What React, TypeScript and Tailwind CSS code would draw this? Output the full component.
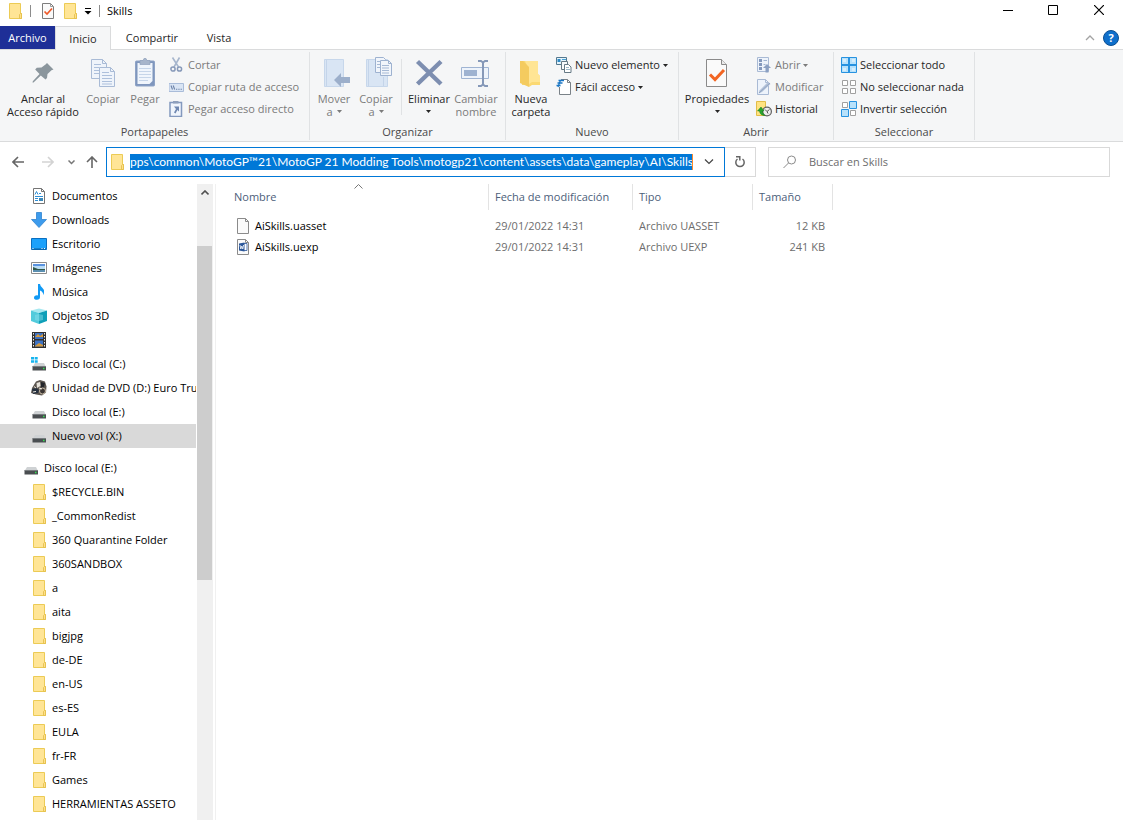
import type { ReactNode } from 'react';

type IconProps = { className?: string };

function FolderIcon({ className = 'h-4 w-4' }: IconProps) {
  return (
    <svg viewBox="0 0 16 16" className={className} aria-hidden="true">
      <path d="M2.500.5h11v10h1v5h-12z" fill="#ffe596" stroke="#eccb55" />
      <path d="M12.500 15.500v-4l1-1h1v5z" fill="#ffe08a" stroke="#e2bd48" strokeWidth=".8" />
    </svg>
  );
}

function CheckPageIcon({ className = 'h-4 w-4' }: IconProps) {
  return (
    <svg viewBox="0 0 16 16" className={className} aria-hidden="true">
      <path d="M2.500.5h8l3 3v12h-11z" fill="#fafafa" stroke="#7d7d7d" />
      <path d="M10.500.5v3h3" fill="none" stroke="#9a9a9a" />
      <path d="M4.500 8.500 7 11l5-5.500" fill="none" stroke="#ee5a2a" strokeWidth="1.700" />
    </svg>
  );
}

function PinIcon() {
  return (
    <svg viewBox="0 0 32 32" className="h-8 w-8" aria-hidden="true">
      <path d="M20 7 26.500 13.500 24.500 14.200 20.500 18 20 22 18.500 23.500 13.800 19.500 6.500 26.500 5.500 26.500 5.800 25.200 12.500 18 8.200 13.500 9.800 11.700 14.500 11.500 18.500 8.500z" fill="#8b969d" />
    </svg>
  );
}

function CopyIcon() {
  return (
    <svg viewBox="0 0 32 32" className="h-8 w-8" aria-hidden="true">
      <g fill="#eff4fb" stroke="#a9bbd6">
        <path d="M4.500 3.500h11l4 4v15h-15z" />
        <path d="M12.500 11.500h11l4 4v15h-15z" />
        <path d="M15.500 3.500v4h4M23.500 11.500v4h4" fill="none" />
      </g>
      <path d="M7 8.500h7M7 11.500h5M7 14.500h5M7 17.500h5M15 16.500h7M15 19.500h10M15 22.500h10M15 25.500h10M15 28h10" stroke="#adc0dc" fill="none" />
    </svg>
  );
}

function PasteIcon() {
  return (
    <svg viewBox="0 0 32 32" className="h-8 w-8" aria-hidden="true">
      <rect x="6.500" y="5" width="19" height="25" rx="1" fill="#7f96bd" stroke="#8ea3c6" />
      <path d="M8.500 7h15v18l-3 3h-12z" fill="#f0f5fc" />
      <path d="M10 12.500h12M10 15.500h12M10 18.500h12M10 21.500h12M10 24.500h9" stroke="#c6d5e9" />
      <path d="M11 4.500h3l1-2h2l1 2h3v4H11z" fill="#a7b5cb" stroke="#8fa0bb" strokeWidth=".7" />
    </svg>
  );
}

function ScissorsIcon() {
  return (
    <svg viewBox="0 0 16 16" className="h-4 w-4" aria-hidden="true">
      <path d="M3.500.5 9.500 10M10.500.5 5 10" stroke="#a7b6cd" strokeWidth="1.600" fill="none" />
      <circle cx="4" cy="12" r="2.100" fill="none" stroke="#8799b9" strokeWidth="1.500" />
      <circle cx="10.500" cy="12" r="2.100" fill="none" stroke="#8799b9" strokeWidth="1.500" />
    </svg>
  );
}

function PathIcon() {
  return (
    <svg viewBox="0 0 16 16" className="h-4 w-4" aria-hidden="true">
      <path d="M0 4.500h14.500v8H0z" fill="#dae5f4" stroke="#a9bcd9" />
      <path d="m2 6.500 1.500 4m.7-4 1.500 4M7 10.200h1.300m1 0h1.300m1 0h1.300" stroke="#6c82a8" strokeWidth="1.100" />
    </svg>
  );
}

function PasteLinkIcon() {
  return (
    <svg viewBox="0 0 16 16" className="h-4 w-4" aria-hidden="true">
      <path d="M1 1.500h11.500v14H1z" fill="#f0f5fc" stroke="#8399be" strokeWidth="1.500" />
      <path d="M4 0h5.500v2.500H4z" fill="#8fa0bc" />
      <path d="M5 5.500h5v5L8.400 9 6.500 12.500l-1.500-1L7 8z" fill="#6f87b1" />
    </svg>
  );
}

function MoveToIcon() {
  return (
    <svg viewBox="0 0 32 32" className="h-8 w-8" aria-hidden="true">
      <path d="M6.500 3.500h19v27h-19z" fill="#d9e5f4" stroke="#c7d7eb" />
      <path d="M8.500 4v26" stroke="#c4d4e9" />
      <path d="m16 24 7-7v4h9v6h-9v4z" fill="#9cafcb" />
    </svg>
  );
}

function CopyToIcon() {
  return (
    <svg viewBox="0 0 32 32" className="h-8 w-8" aria-hidden="true">
      <path d="M6.500 3.500h21v27h-21z" fill="#d9e5f4" stroke="#c7d7eb" />
      <path d="M8.500 4v26M23.500 21v9" stroke="#c4d4e9" />
      <g fill="#f1f5fb" stroke="#9eb2d0">
        <path d="M15.500 1.500h8l2 2v13h-10z" />
        <path d="M20.500 4.500h8l3 3v12h-11z" />
        <path d="M28.500 4.500v3h3" fill="none" />
      </g>
      <path d="M17 5.500h3M17 8.500h3M17 11.500h3M22 9.500h7M22 12h7M22 14.500h7M22 17h7" stroke="#a6b9d5" />
    </svg>
  );
}

function DeleteIcon() {
  return (
    <svg viewBox="0 0 32 32" className="h-8 w-8" aria-hidden="true">
      <path d="M4.500 5.500 28 28M28 5.500 4.500 28" stroke="#7d8eb0" strokeWidth="4.400" />
    </svg>
  );
}

function RenameIcon() {
  return (
    <svg viewBox="0 0 32 32" className="h-8 w-8" aria-hidden="true">
      <path d="M1.500 11.500h27v11h-27z" fill="#edf3fb" stroke="#9fb4d3" />
      <path d="M4 14h13v6H4z" fill="#9db2d1" />
      <path d="M18 5h3l2 1.500L25 5h3M23 6.500v22M18 30h3l2-1.500 2 1.500h3" stroke="#8598b8" strokeWidth="2" fill="none" />
    </svg>
  );
}

function NewFolderIcon() {
  return (
    <svg viewBox="0 0 32 32" className="h-8 w-8" aria-hidden="true">
      <path d="M5 5h18v13l2 2v9H7z" fill="#fbd973" />
      <path d="M10 5h13v13l2 2v9H13V12z" fill="#ffe594" />
      <path d="M5 5h3l6 6v20l-9-4z" fill="#f4cb5f" />
      <path d="M14 31v-3l3-2h8v3h-8z" fill="#fbd973" />
    </svg>
  );
}

function NewItemIcon() {
  return (
    <svg viewBox="0 0 16 16" className="h-4 w-4" aria-hidden="true">
      <path d="M.5.5h10v7H.5z" fill="#e4f3fb" stroke="#54788f" />
      <path d="M1.500 2h3v3h-3z" fill="#2d8ac7" />
      <path d="M6 2.500h4M6 4.500h3" stroke="#49a3d8" />
      <path d="M5.500 4.500h6v8h-6z" fill="#f7fafc" stroke="#657985" />
      <path d="M8.500 7.500h4l2.500 2.500v5.500H8.500z" fill="#fff" stroke="#657985" />
      <path d="M10 10.500h3M10 12.500h4" stroke="#9db8c8" />
    </svg>
  );
}

function EasyAccessIcon() {
  return (
    <svg viewBox="0 0 16 16" className="h-4 w-4" aria-hidden="true">
      <path d="M3.500.5h8l3 3v12h-11z" fill="#fff" stroke="#7a8288" />
      <path d="M11.500.5v3h3" stroke="#7a8288" fill="none" />
      <path d="M0 0h5v8H0z" fill="#f5f6f7" />
      <path d="M2.500 1.500H8M1.500 4h5M.5 6.500h4" stroke="#1976c4" strokeWidth="1.500" />
      <path d="M4.500 1 2 8" stroke="#1976c4" strokeWidth="1.200" />
    </svg>
  );
}

function PropertiesIcon() {
  return (
    <svg viewBox="0 0 32 32" className="h-8 w-8" aria-hidden="true">
      <path d="M5.500 3.500h15l5 5v22h-20z" fill="#fafafa" stroke="#8a8a8a" />
      <path d="M20.500 3.500v5h5" fill="#eaeaea" stroke="#8a8a8a" />
      <path d="m9 18.500 5 5 9-9.500" fill="none" stroke="#f26522" strokeWidth="3" />
    </svg>
  );
}

function OpenIcon() {
  return (
    <svg viewBox="0 0 16 16" className="h-4 w-4" aria-hidden="true">
      <path d="M1.500.5h11v14h-11z" fill="#edf3fb" stroke="#a9bad5" />
      <path d="M3 2h3v3H3zM3 6h3v3H3zM3 10h3v3H3z" fill="#8499bd" />
      <path d="M7.500 3.500h3.500M7.500 7.500h2" stroke="#a1b4d1" />
      <path d="m11 7 4 4h-2.500v4.500h-3V11H7z" fill="#8ba0c2" />
    </svg>
  );
}

function EditIcon() {
  return (
    <svg viewBox="0 0 16 16" className="h-4 w-4" aria-hidden="true">
      <path d="M1.500.5h8l3 3v12h-11z" fill="#edf3fb" stroke="#a9bad5" />
      <path d="M9.500.5v3h3" fill="none" stroke="#a9bad5" />
      <path d="m2.500 14.500 1-3L12 3l2.500 2L6 13z" fill="#b3c2d8" />
      <path d="m3 14 11-10" stroke="#8fa3c3" />
    </svg>
  );
}

function HistoryIcon() {
  return (
    <svg viewBox="0 0 16 16" className="h-4 w-4" aria-hidden="true">
      <path d="M.5.5h9v7h1v7H.5z" fill="#ffe382" stroke="#e2bd48" />
      <circle cx="11" cy="10.500" r="4.400" fill="#eee" stroke="#606060" strokeWidth="1.200" />
      <path d="m9 8.500 2 2 2.500-2M11 10.500l1 2" stroke="#555" fill="none" />
      <path d="M1.500 10 5 6l3 4H6.300q.2 2.500 2.500 4.500Q4 14.500 3.500 10z" fill="#28a52f" stroke="#147a1b" strokeWidth=".5" />
    </svg>
  );
}

const plainTiles = ['M1.500 1.500h5v5h-5z', 'M9.500 1.500h5v5h-5z', 'M1.500 9.500h5v5h-5z', 'M9.500 9.500h5v5h-5z'];
const markedTiles: Record<number, string> = { 1: 'M8.500.5h7v7h-7z', 2: 'M.5 8.500h7v7h-7z' };

function TilesIcon({ mode }: { mode: 'all' | 'none' | 'invert' }) {
  if (mode === 'all') {
    return (
      <svg viewBox="0 0 16 16" className="h-4 w-4" aria-hidden="true">
        <path d="M.5.5h15v15H.5z" fill="#b7e1fb" stroke="#2792e0" />
        <path d="M8 0v16M0 8h16" stroke="#2792e0" strokeWidth="2" />
        <path d="M2 2h3v3H2zM11 2h3v3h-3zM2 11h3v3H2zM11 11h3v3h-3z" fill="#d5eefd" />
      </svg>
    );
  }
  return (
    <svg viewBox="0 0 16 16" className="h-4 w-4" aria-hidden="true">
      {plainTiles.map((d, i) =>
        mode === 'invert' && markedTiles[i] ? (
          <path key={d} d={markedTiles[i]} fill="#b7e1fb" stroke="#2792e0" />
        ) : (
          <path key={d} d={d} fill="#fff" stroke="#a0a0a0" />
        ),
      )}
    </svg>
  );
}

function DocumentsIcon() {
  return (
    <svg viewBox="0 0 16 16" className="h-4 w-4" aria-hidden="true">
      <path d="M2.500.5h8l3 3v12h-11z" fill="#fff" stroke="#757575" />
      <path d="M10.500.5v3h3" fill="none" stroke="#757575" />
      <path d="m4 6.500 1.500-3L7 6.500M8 5.500h2M4 8.500h8M4 10.500h3M4 12.500h3" stroke="#2e8fd6" fill="none" />
      <path d="M8 10h4v3H8z" fill="#3b88b8" />
    </svg>
  );
}

function DownloadIcon() {
  return (
    <svg viewBox="0 0 16 16" className="h-4 w-4" aria-hidden="true">
      <path d="M5.500.5h5v7h5L8 15.500.5 7.500h5z" fill="#3d9bec" stroke="#2f83cf" strokeWidth=".8" />
    </svg>
  );
}

function DesktopIcon() {
  return (
    <svg viewBox="0 0 16 16" className="h-4 w-4" aria-hidden="true">
      <path d="M.5 2.500h15v11H.5z" fill="#1ba1fb" stroke="#0a6fc0" />
      <path d="M1 13h14" stroke="#075e9f" />
      <path d="M1.500 12.500h1M10.500 12.500h1M13 12.500h1" stroke="#fff" />
    </svg>
  );
}

function ImagesIcon() {
  return (
    <svg viewBox="0 0 16 16" className="h-4 w-4" aria-hidden="true">
      <path d="M.5 2.500h15v11H.5z" fill="#fff" stroke="#8c8c8c" />
      <path d="M2 4h12v8H2z" fill="#b9dcf5" />
      <path d="M2 4h12v2H2z" fill="#5a93e0" />
      <path d="m2 7 5 2h7v1H2z" fill="#31584a" />
      <path d="M2 10h12v2H2z" fill="#5b8fb0" />
    </svg>
  );
}

function MusicIcon() {
  return (
    <svg viewBox="0 0 16 16" className="h-4 w-4" aria-hidden="true">
      <path d="M7 0h2q.3 2.500 2.500 4T13 8.500q0 1.500-.8 2.500.3-3-3.200-4.500V13q0 2.700-3 2.700-3 0-3-2 0-2.200 3-2.400L7 11.500z" fill="#119af5" />
    </svg>
  );
}

function CubeIcon() {
  return (
    <svg viewBox="0 0 16 16" className="h-4 w-4" aria-hidden="true">
      <path d="m0 2.500 8-2 8 2-8 2.500z" fill="#a6e8f0" />
      <path d="M0 2.500 8 5v11l-8-3z" fill="#52cbdc" />
      <path d="M16 2.500 8 5v11l8-3z" fill="#0e9fb8" />
      <path d="m4 7 4-1 4 1v5l-4 1-4-1z" fill="#8fe0ea" opacity=".45" />
    </svg>
  );
}

function VideoIcon() {
  return (
    <svg viewBox="0 0 16 16" className="h-4 w-4" aria-hidden="true">
      <path d="M1 0h14v16H1z" fill="#303030" />
      <path d="M2.500 1v14M13.500 1v14" stroke="#e9e9e9" strokeDasharray="1.500 1.500" />
      <path d="M4 1h8v6H4zM4 8.500h8v6H4z" fill="#3d72c4" />
      <path d="m4 5 3-3 2 2 3-2v3zM4 14l4-3 4 2v1.500H4z" fill="#d69a3a" />
    </svg>
  );
}

function DriveIcon({ system = false }: { system?: boolean }) {
  return (
    <svg viewBox="0 0 16 16" className="h-4 w-4" aria-hidden="true">
      <path d="M4 7h9l2 4H1.500z" fill="#cfd2d4" />
      <path d="M1.500 10.500h13.500v4H1.500z" fill="#4a4e51" />
      <path d="M1.500 10.500h13.500" stroke="#777b7e" />
      <path d="M12 11.800h1.500v1.500H12z" fill="#32e24f" />
      {system && <path d="M0 1h3v2.500H0zM3.700 1h3v2.500h-3zM0 4.200h3v2.500H0zM3.700 4.200h3v2.500h-3z" fill="#17b4ee" />}
    </svg>
  );
}

function DvdIcon() {
  return (
    <svg viewBox="0 0 16 16" className="h-4 w-4" aria-hidden="true">
      <path d="M5 1.500 9 0l5 1.500 1.500 5-.5 6-4 3-6-1L0 13l1-5z" fill="#5c5650" />
      <path d="M5.500 3 9 2l.5 4-3.500 2z" fill="#e6e2da" />
      <path d="m10 2 4 1-1 4-3 1z" fill="#24262b" />
      <path d="m1 9 4-1 3 2-1 3-5 1z" fill="#26303f" />
      <circle cx="11.500" cy="11" r="3" fill="#3b3633" stroke="#c9bba6" />
      <path d="M3 6.500 5 8M8 8l3 1M2 12l3-.5" stroke="#f1ece3" />
    </svg>
  );
}

function FileIcon({ word = false }: { word?: boolean }) {
  return (
    <svg viewBox="0 0 16 16" className="h-4 w-4 shrink-0" aria-hidden="true">
      <path d="M1.500.5h8l3 3v12h-11z" fill="#fbfbfb" stroke="#8b8b8b" />
      <path d="M9.500.5v3h3" fill="none" stroke="#8b8b8b" />
      {word && (
        <>
          <path d="M8 4.500h3v7H8" fill="#fff" stroke="#2b579a" strokeWidth=".8" />
          <path d="m3 4.500 5.500-1v9L3 11.500z" fill="#2b579a" />
          <path d="m4 6 .8 4L5.800 7l1 3 .8-4" fill="none" stroke="#fff" strokeWidth=".8" />
        </>
      )}
    </svg>
  );
}

function Caret() {
  return (
    <svg viewBox="0 0 5 3" className="h-[3px] w-[5px] shrink-0" aria-hidden="true">
      <path d="M0 0h5L2.500 3z" fill="currentColor" />
    </svg>
  );
}

type BigProps = { icon: ReactNode; lines: string[]; width: string; disabled?: boolean; caret?: boolean };

function BigButton({ icon, lines, width, disabled = false, caret = false }: BigProps) {
  return (
    <button
      type="button"
      disabled={disabled}
      className={`flex shrink-0 flex-col items-center pt-0.5 text-[#262626] disabled:text-[#7b7b7b] ${width}`}
    >
      {icon}
      <span className="flex flex-col items-center pt-1 leading-[13px] whitespace-nowrap">
        {lines.map((line, i) => (
          <span key={line} className="flex items-center gap-1">
            {line}
            {caret && i === 1 && <Caret />}
          </span>
        ))}
        {caret && lines.length === 1 && (
          <span className="flex h-3 items-center">
            <Caret />
          </span>
        )}
      </span>
    </button>
  );
}

type SmallProps = { icon: ReactNode; label: string; disabled?: boolean; caret?: boolean };

function SmallButton({ icon, label, disabled = false, caret = false }: SmallProps) {
  return (
    <button
      type="button"
      disabled={disabled}
      className="flex h-[22px] items-center gap-[3px] whitespace-nowrap text-[#262626] disabled:text-[#7b7b7b]"
    >
      {icon}
      <span>{label}</span>
      {caret && <Caret />}
    </button>
  );
}

function Group({ title, width, children }: { title: string; width: string; children: ReactNode }) {
  return (
    <section aria-label={title} className={`mt-0.5 mb-px flex shrink-0 flex-col border-r border-[#e0e2e4] pt-0.5 ${width}`}>
      <div className="flex h-[70px] items-start">{children}</div>
      <h2 className="text-center leading-4 text-[#4a4a4a]">{title}</h2>
    </section>
  );
}

const quick: { label: string; icon: ReactNode; selected?: boolean }[] = [
  { label: 'Documentos', icon: <DocumentsIcon /> },
  { label: 'Downloads', icon: <DownloadIcon /> },
  { label: 'Escritorio', icon: <DesktopIcon /> },
  { label: 'Imágenes', icon: <ImagesIcon /> },
  { label: 'Música', icon: <MusicIcon /> },
  { label: 'Objetos 3D', icon: <CubeIcon /> },
  { label: 'Vídeos', icon: <VideoIcon /> },
  { label: 'Disco local (C:)', icon: <DriveIcon system /> },
  { label: 'Unidad de DVD (D:) Euro Truck', icon: <DvdIcon /> },
  { label: 'Disco local (E:)', icon: <DriveIcon /> },
  { label: 'Nuevo vol (X:)', icon: <DriveIcon />, selected: true },
];

const folders = [
  '$RECYCLE.BIN', '_CommonRedist', '360 Quarantine Folder', '360SANDBOX', 'a', 'aita', 'bigjpg',
  'de-DE', 'en-US', 'es-ES', 'EULA', 'fr-FR', 'Games', 'HERRAMIENTAS ASSETO',
];

const files = [
  { name: 'AiSkills.uasset', date: '29/01/2022 14:31', type: 'Archivo UASSET', size: '12 KB', word: false },
  { name: 'AiSkills.uexp', date: '29/01/2022 14:31', type: 'Archivo UEXP', size: '241 KB', word: true },
];

function TreeItem({ icon, label, selected = false, root = false }: { icon: ReactNode; label: string; selected?: boolean; root?: boolean }) {
  return (
    <li>
      <a
        href="#"
        className={`flex h-6 items-center gap-[5px] overflow-hidden whitespace-nowrap ${root ? 'pl-[23px]' : 'pl-[31px]'} ${selected ? 'bg-[#d9d9d9]' : ''}`}
      >
        <span className="shrink-0">{icon}</span>
        <span>{label}</span>
      </a>
    </li>
  );
}

function TitleBar() {
  return (
    <header className="flex h-[26px] items-start">
      <div className="flex h-[22px] items-center pl-[7px]">
        <FolderIcon />
        <span className="mx-[7px] h-3 w-px bg-[#8c8c8c]" />
        <button type="button" aria-label="Propiedades" className="ml-0.5">
          <CheckPageIcon />
        </button>
        <button type="button" aria-label="Nueva carpeta" className="ml-1.5">
          <FolderIcon />
        </button>
        <button type="button" aria-label="Personalizar barra" className="ml-1.5">
          <svg viewBox="0 0 8 8" className="h-2 w-2" aria-hidden="true">
            <path d="M1 1.500h6" stroke="#000" />
            <path d="M.5 4h7L4 7.500z" />
          </svg>
        </button>
        <span className="mx-[7px] h-3 w-px bg-[#8c8c8c]" />
        <h1>Skills</h1>
      </div>
      <div className="ml-auto flex pr-px">
        <button type="button" aria-label="Minimizar" className="flex h-5 w-[45px] items-center justify-center">
          <svg viewBox="0 0 10 10" className="h-2.5 w-2.5" aria-hidden="true"><path d="M0 5.500h10" stroke="#000" /></svg>
        </button>
        <button type="button" aria-label="Maximizar" className="flex h-5 w-[46px] items-center justify-center">
          <svg viewBox="0 0 10 10" className="h-2.5 w-2.5" aria-hidden="true"><path d="M.5.5h9v9h-9z" fill="none" stroke="#000" /></svg>
        </button>
        <button type="button" aria-label="Cerrar" className="flex h-5 w-[46px] items-center justify-center">
          <svg viewBox="0 0 10 10" className="h-2.5 w-2.5" aria-hidden="true"><path d="m0 0 10 10M10 0 0 10" stroke="#000" strokeWidth="1.200" /></svg>
        </button>
      </div>
    </header>
  );
}

function Tabs() {
  return (
    <nav aria-label="Cinta" className="flex h-6 items-stretch border-b border-[#dadbdc]">
      <button type="button" className="w-[55px] bg-[#1e2f97] text-white">Archivo</button>
      <button type="button" className="-mb-px w-14 border border-b-0 border-[#dadbdc] bg-[#f5f6f7] text-[#262626]">Inicio</button>
      <button type="button" className="w-[82px] text-[#262626]">Compartir</button>
      <button type="button" className="w-[52px] text-[#262626]">Vista</button>
      <div className="ml-auto flex items-center gap-2 pr-1">
        <button type="button" aria-label="Minimizar la cinta">
          <svg viewBox="0 0 10 6" className="h-1.5 w-2.5" aria-hidden="true"><path d="m1 5 4-4 4 4" fill="none" stroke="#a3a3a3" strokeWidth="1.300" /></svg>
        </button>
        <button type="button" aria-label="Ayuda" className="flex h-4 w-4 items-center justify-center rounded-full border border-[#0b4f92] bg-[#0f6fcb] font-bold text-white">
          ?
        </button>
      </div>
    </nav>
  );
}

function Ribbon() {
  return (
    <div className="flex overflow-hidden border-b border-[#dadbdc] bg-[#f5f6f7]">
      <Group title="Portapapeles" width="w-[310px]">
        <BigButton icon={<PinIcon />} lines={['Anclar al', 'Acceso rápido']} width="w-[82px] pl-1" />
        <BigButton icon={<CopyIcon />} lines={['Copiar']} width="w-[42px]" disabled />
        <BigButton icon={<PasteIcon />} lines={['Pegar']} width="w-[42px]" disabled />
        <div className="ml-[3px]">
          <SmallButton icon={<ScissorsIcon />} label="Cortar" disabled />
          <SmallButton icon={<PathIcon />} label="Copiar ruta de acceso" disabled />
          <SmallButton icon={<PasteLinkIcon />} label="Pegar acceso directo" disabled />
        </div>
      </Group>
      <Group title="Organizar" width="w-[196px]">
        <BigButton icon={<MoveToIcon />} lines={['Mover', 'a']} width="ml-[3px] w-[42px]" disabled caret />
        <BigButton icon={<CopyToIcon />} lines={['Copiar', 'a']} width="w-[42px]" disabled caret />
        <span className="mx-1 mt-[5px] h-14 w-px bg-[#e0e2e4]" />
        <BigButton icon={<DeleteIcon />} lines={['Eliminar']} width="w-[46px]" caret />
        <BigButton icon={<RenameIcon />} lines={['Cambiar', 'nombre']} width="w-12" disabled />
      </Group>
      <Group title="Nuevo" width="w-[173px]">
        <BigButton icon={<NewFolderIcon />} lines={['Nueva', 'carpeta']} width="w-[50px]" />
        <div>
          <SmallButton icon={<NewItemIcon />} label="Nuevo elemento" caret />
          <SmallButton icon={<EasyAccessIcon />} label="Fácil acceso" caret />
        </div>
      </Group>
      <Group title="Abrir" width="w-[155px]">
        <BigButton icon={<PropertiesIcon />} lines={['Propiedades']} width="ml-0.5 w-[72px]" caret />
        <div className="ml-[3px]">
          <SmallButton icon={<OpenIcon />} label="Abrir" disabled caret />
          <SmallButton icon={<EditIcon />} label="Modificar" disabled />
          <SmallButton icon={<HistoryIcon />} label="Historial" />
        </div>
      </Group>
      <Group title="Seleccionar" width="w-[141px]">
        <div className="ml-[7px]">
          <SmallButton icon={<TilesIcon mode="all" />} label="Seleccionar todo" />
          <SmallButton icon={<TilesIcon mode="none" />} label="No seleccionar nada" />
          <SmallButton icon={<TilesIcon mode="invert" />} label="Invertir selección" />
        </div>
      </Group>
    </div>
  );
}

function AddressBar() {
  return (
    <div className="grid h-[42px] shrink-0 grid-cols-[106px_minmax(0,619fr)_31px_minmax(0,354fr)] items-start pt-[5px] pr-[13px]">
      <div className="flex h-[30px] items-center pl-3">
        <button type="button" aria-label="Atrás">
          <svg viewBox="0 0 12 12" className="h-3 w-3" aria-hidden="true"><path d="M12 6H1M6 1 1 6l5 5" fill="none" stroke="#666" strokeWidth="1.600" /></svg>
        </button>
        <button type="button" aria-label="Adelante" disabled className="ml-[18px]">
          <svg viewBox="0 0 12 12" className="h-3 w-3" aria-hidden="true"><path d="M0 6h11M6 1l5 5-5 5" fill="none" stroke="#d3d3d3" strokeWidth="1.600" /></svg>
        </button>
        <button type="button" aria-label="Ubicaciones recientes" className="ml-3.5">
          <svg viewBox="0 0 7 5" className="h-[5px] w-[7px]" aria-hidden="true"><path d="m.5.5 3 3 3-3" fill="none" stroke="#777" strokeWidth="1.500" /></svg>
        </button>
        <button type="button" aria-label="Subir" className="ml-[11px]">
          <svg viewBox="0 0 12 12" className="h-3 w-3" aria-hidden="true"><path d="M6 12V1M1 6l5-5 5 5" fill="none" stroke="#666" strokeWidth="1.600" /></svg>
        </button>
      </div>
      <div className="flex h-[30px] items-center border border-[#0078d7] pl-0.5">
        <span className="shrink-0"><FolderIcon /></span>
        <input
          type="text"
          aria-label="Dirección"
          defaultValue={'pps\\common\\MotoGP™21\\MotoGP 21 Modding Tools\\motogp21\\content\\assets\\data\\gameplay\\AI\\Skills'}
          className="ml-[5px] h-4 min-w-0 flex-1 border-r border-[#ff8728] bg-[#0078d7] font-['Lato',sans-serif] text-xs text-white outline-none"
        />
        <button type="button" aria-label="Mostrar historial" className="flex h-full w-[31px] items-center justify-center">
          <svg viewBox="0 0 10 6" className="h-1.5 w-2.5" aria-hidden="true"><path d="m1 .5 4 4 4-4" fill="none" stroke="#444" strokeWidth="1.200" /></svg>
        </button>
      </div>
      <button type="button" aria-label="Actualizar" className="flex h-[30px] items-center justify-center border border-l-0 border-[#d9d9d9]">
        <svg viewBox="0 0 12 12" className="h-3 w-3" aria-hidden="true">
          <path d="M8.500 3A4.200 4.200 0 1 1 3.500 3" fill="none" stroke="#666" strokeWidth="1.500" />
          <path d="M2 .8h3.800v3.700" fill="none" stroke="#666" strokeWidth="1.500" />
        </svg>
      </button>
      <label className="ml-3 flex h-[30px] items-center border border-[#d9d9d9] pl-3.5">
        <svg viewBox="0 0 14 14" className="h-3.5 w-3.5 shrink-0" aria-hidden="true">
          <circle cx="8.500" cy="5" r="4" fill="none" stroke="#8a8a8a" />
          <path d="M5.500 8 .5 13" stroke="#8a8a8a" />
        </svg>
        <input type="search" aria-label="Buscar en Skills" placeholder="Buscar en Skills" className="ml-3 min-w-0 flex-1 outline-none placeholder:text-[#6d6d6d]" />
      </label>
    </div>
  );
}

const thInner = 'flex h-[26px] items-center border-r border-[#e3e3e3]';

export default function App() {
  return (
    <div className="flex h-screen flex-col overflow-hidden bg-white font-['Open_Sans','Noto_Sans',sans-serif] text-[11px] leading-4 text-black">
      <TitleBar />
      <Tabs />
      <Ribbon />
      <AddressBar />
      <div className="flex min-h-0 flex-1">
        <nav aria-label="Carpetas" className="w-[196px] shrink-0 overflow-hidden">
          <ul>
            {quick.map((q) => (
              <TreeItem key={q.label} icon={q.icon} label={q.label} selected={q.selected} />
            ))}
          </ul>
          <ul className="pt-2">
            <TreeItem icon={<DriveIcon />} label="Disco local (E:)" root />
            {folders.map((f) => (
              <TreeItem key={f} icon={<FolderIcon />} label={f} />
            ))}
          </ul>
        </nav>
        <div className="ml-px flex w-4 shrink-0 flex-col bg-[#f0f0f0]">
          <button type="button" aria-label="Desplazar hacia arriba" className="flex h-[18px] items-center justify-center">
            <svg viewBox="0 0 8 6" className="h-1.5 w-2" aria-hidden="true"><path d="m.5 4.500 3.500-3.500 3.500 3.500" fill="none" stroke="#505050" strokeWidth="1.600" /></svg>
          </button>
          <div className="mt-11 mr-px h-[334px] bg-[#cdcdcd]" />
        </div>
        <main className="ml-0.5 min-w-0 flex-1 border-l border-[#f0f0f0]">
          <table className="w-[617px] table-fixed border-collapse">
            <colgroup>
              <col className="w-[273px]" />
              <col className="w-36" />
              <col className="w-[120px]" />
              <col className="w-20" />
            </colgroup>
            <thead className="text-left text-[#4c607a]">
              <tr className="h-[31px] align-top">
                <th className="p-0 font-normal">
                  <div className={`relative pl-[18px] ${thInner}`}>
                    Nombre
                    <svg viewBox="0 0 9 5" className="absolute top-0 left-[138px] h-[5px] w-[9px]" aria-hidden="true"><path d="m.5 4.500 4-4 4 4" fill="none" stroke="#777" /></svg>
                  </div>
                </th>
                <th className="p-0 font-normal"><div className={`pl-1.5 ${thInner}`}>Fecha de modificación</div></th>
                <th className="p-0 font-normal"><div className={`pl-1.5 ${thInner}`}>Tipo</div></th>
                <th className="p-0 font-normal"><div className={`pl-1.5 ${thInner}`}>Tamaño</div></th>
              </tr>
            </thead>
            <tbody className="text-[#6d6d6d]">
              {files.map((f) => (
                <tr key={f.name} className="h-[21px]">
                  <td className="p-0 pl-5 text-black">
                    <span className="flex items-center gap-[3px]">
                      <FileIcon word={f.word} />
                      {f.name}
                    </span>
                  </td>
                  <td className="p-0 pl-1.5">{f.date}</td>
                  <td className="p-0 pl-1.5">{f.type}</td>
                  <td className="p-0 pr-2 text-right">{f.size}</td>
                </tr>
              ))}
            </tbody>
          </table>
        </main>
      </div>
    </div>
  );
}
